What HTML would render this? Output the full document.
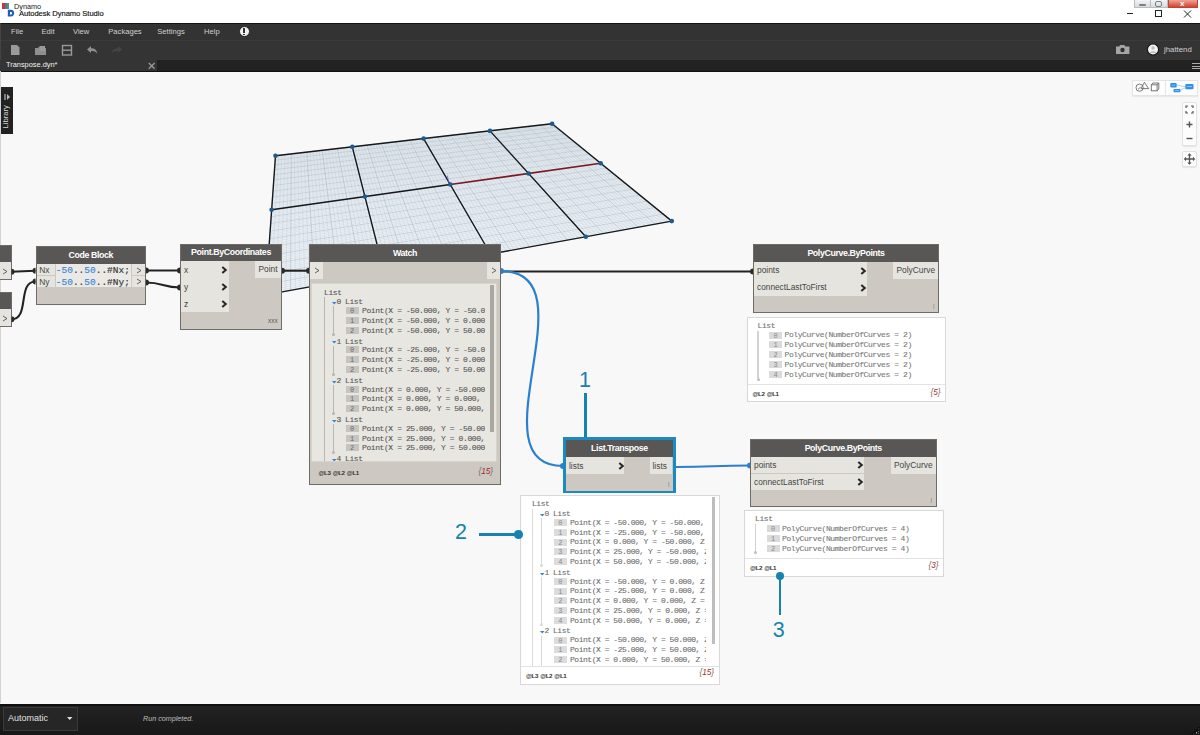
<!DOCTYPE html><html><head><meta charset="utf-8"><style>
*{margin:0;padding:0;box-sizing:border-box}
html,body{width:1200px;height:735px;overflow:hidden;background:#f8f8f8;font-family:"Liberation Sans",sans-serif}
.a{position:absolute}
.t{position:absolute;white-space:nowrap;line-height:1}
.mono{font-family:"Liberation Mono",monospace}
.node{position:absolute;background:#cfcbc4;border:1px solid #8f8b85}
.hdrx{position:absolute;left:0;right:0;top:0;background:#5b5957;color:#fff;font-weight:bold;font-size:8px;text-align:center}
.port{position:absolute;background:#e7e5e0;color:#3c3c3c;font-size:8.2px}
.chev{position:absolute;width:5px;height:5px;border-right:1.6px solid #2a2a2a;border-top:1.6px solid #2a2a2a;transform:rotate(45deg)}
.prev{position:absolute;background:#fff;border:1px solid #d9d9d9}
.row{position:absolute;white-space:nowrap;font-family:"Liberation Mono",monospace;font-size:8px;letter-spacing:inherit;color:#6a6a6a;line-height:1;-webkit-text-stroke:0.1px currentColor}
body{letter-spacing:-0.41px}
.t{letter-spacing:0}
.lbl{position:absolute;background:#d9d9d9;color:#8a8a8a;font-family:"Liberation Mono",monospace;font-size:7.5px;text-align:right;padding-right:2px;line-height:8px;height:8px}
</style></head><body><div class="a" style="left:0;top:0;width:1200px;height:23px;background:#ffffff"></div><div class="a" style="left:2px;top:3px;width:3px;height:6px;background:#c8363a"></div><div class="a" style="left:5px;top:3px;width:2px;height:6px;background:#5a6fa8"></div><div class="a" style="left:7px;top:3px;width:2px;height:6px;background:#3b9a8a"></div><div class="t" style="left:14px;top:2.5px;font-size:7.3px;color:#222">Dynamo</div><svg class="a" style="left:0;top:0" width="20" height="20"><path d="M7.8 9.8h3.2c2.1 0 3.1 1.6 3.1 3.4s-1 3.4-3.1 3.4H7.8z" fill="#1b5fb8"/><path d="M10 11.9h0.8c0.9 0 1.3 0.6 1.3 1.3s-0.4 1.3-1.3 1.3H10z" fill="#fff"/></svg><div class="t" style="left:19px;top:9.6px;font-size:7.6px;color:#111;-webkit-text-stroke:0.15px #111;letter-spacing:-0.05px">Autodesk Dynamo Studio</div><div class="a" style="left:1134px;top:0;width:17px;height:8px;background:linear-gradient(#f4f4f4,#d8dadd);border:1px solid #b9bcc0;border-top:0"></div><div class="a" style="left:1139px;top:4px;width:7px;height:2px;background:#7b7f85;border-radius:1px"></div><div class="a" style="left:1151px;top:0;width:17px;height:8px;background:linear-gradient(#f4f4f4,#d8dadd);border:1px solid #b9bcc0;border-top:0;border-left:0"></div><div class="a" style="left:1155px;top:1px;width:7px;height:6px;border:1.5px solid #7b7f85;border-radius:2px"></div><div class="a" style="left:1168px;top:0;width:30px;height:8px;background:linear-gradient(#e9a79a,#d9412b);border:1px solid #b8463a;border-top:0"></div><div class="t" style="left:1180px;top:-0.5px;font-size:8px;font-weight:bold;color:#fff">x</div><div class="a" style="left:1127px;top:13px;width:6px;height:1px;background:#222"></div><div class="a" style="left:1155px;top:10px;width:7px;height:7px;border:1px solid #222"></div><svg class="a" style="left:1183px;top:9.5px" width="9" height="8"><path d="M1 0.5L8 7.5M8 0.5L1 7.5" stroke="#222" stroke-width="1"/></svg><div class="a" style="left:0;top:23px;width:1200px;height:1px;background:#141414"></div><div class="a" style="left:0;top:24px;width:1200px;height:15.5px;background:#333333"></div><div class="a" style="left:0;top:39.5px;width:1200px;height:1px;background:#3b3b3b"></div><div class="a" style="left:0;top:40.5px;width:1200px;height:19.5px;background:#343434"></div><div class="a" style="left:0;top:23px;width:1px;height:48px;background:#444"></div><div class="t" style="left:11px;top:28px;font-size:7.6px;color:#d0d0d0">File</div><div class="t" style="left:41.5px;top:28px;font-size:7.6px;color:#d0d0d0">Edit</div><div class="t" style="left:73px;top:28px;font-size:7.6px;color:#d0d0d0">View</div><div class="t" style="left:108.3px;top:28px;font-size:7.6px;color:#d0d0d0">Packages</div><div class="t" style="left:157.3px;top:28px;font-size:7.6px;color:#d0d0d0">Settings</div><div class="t" style="left:204px;top:28px;font-size:7.6px;color:#d0d0d0">Help</div><div class="a" style="left:238.5px;top:26px;width:11px;height:11px;border-radius:50%;background:#f0f0f0;border:1px solid #222"></div><div class="a" style="left:243.2px;top:28px;width:1.6px;height:4.5px;background:#333"></div><div class="a" style="left:243.2px;top:33.5px;width:1.6px;height:1.6px;background:#333"></div><svg class="a" style="left:0;top:39px" width="140" height="20"><path d="M11 6h6l2.5 2.5V16H11z" fill="#9a9a9a"/><path d="M35 9h3l1-1.5h4V9h3v7H35z" fill="#8f8f8f"/><path d="M40 7h5v5h-5z" fill="#9a9a9a"/><rect x="62.5" y="6.5" width="9" height="9.5" fill="none" stroke="#9a9a9a" stroke-width="1.4"/><path d="M62.5 11.2h9" stroke="#9a9a9a" stroke-width="1.4"/><path d="M87 10.5l4-3.5v2.2c3 0 5.5 1 6.5 5.3c-1.8-2.2-3.5-2.6-6.5-2.6v2.2z" fill="#8f8f8f"/><path d="M122 10.5l-4-3.5v2.2c-3 0-5.5 1-6.5 5.3c1.8-2.2 3.5-2.6 6.5-2.6v2.2z" fill="#444"/></svg><svg class="a" style="left:1110px;top:39px" width="90" height="20"><path d="M6 7.5h3l1.2-1.5h4l1.2 1.5h4v7.5H6z" fill="#a5a5a5"/><circle cx="12.5" cy="11" r="2.2" fill="#2f2f2f"/><circle cx="43" cy="10.5" r="6" fill="#111"/><circle cx="43" cy="10.5" r="5" fill="#f2f2f2"/><circle cx="43" cy="9" r="1.7" fill="#bdbdbd"/><path d="M39.8 14c0.5-2.5 5.9-2.5 6.4 0z" fill="#bdbdbd"/></svg><div class="t" style="left:1164px;top:46px;font-size:7.8px;color:#d0d0d0">jhattend</div><div class="a" style="left:0;top:60px;width:1200px;height:11px;background:#222222"></div><div class="a" style="left:0;top:70.5px;width:1200px;height:1px;background:#121212"></div><div class="a" style="left:0;top:60px;width:157px;height:10.5px;background:#343434"></div><div class="t" style="left:6px;top:60.5px;font-size:7.4px;color:#f0f0f0">Transpose.dyn*</div><svg class="a" style="left:147px;top:61px" width="9" height="9"><path d="M1.8 2L7.6 7.8M7.6 2L1.8 7.8" stroke="#9a9a9a" stroke-width="1.3"/></svg><div class="a" style="left:1192px;top:63px;width:8px;height:1px;background:#aaa"></div><div class="a" style="left:1192px;top:65.5px;width:8px;height:1px;background:#aaa"></div><div class="a" style="left:1192px;top:68px;width:8px;height:1px;background:#aaa"></div><div class="a" style="left:0;top:71.5px;width:1200px;height:632px;background:#f8f8f8"></div><div class="a" style="left:0;top:71px;width:1px;height:632px;background:#d2d2d2"></div><div class="a" style="left:1px;top:87px;width:12px;height:47px;background:#222"></div><div class="t" style="left:-8px;top:112.5px;font-size:7.6px;color:#d5d5d5;transform:rotate(-90deg);width:28px;text-align:center">Library</div><svg class="a" style="left:3px;top:93px" width="8" height="8"><path d="M2 1v6" stroke="#bbb" stroke-width="1.2"/><path d="M4 1l3 3l-3 3z" fill="#bbb"/></svg><div class="a" style="left:0;top:703.5px;width:1200px;height:31.5px;background:linear-gradient(#101010 0,#101010 1.5px,#222 2px,#181818 100%)"></div><svg class="a" style="left:1190px;top:725px" width="10" height="10"><path d="M9 3v1h-1zM6 7h1v1h-1zM9 6v1h-1zM9 9h-1v-1zM6 9h1v-1zM3 9h1v-1z" fill="#aaa"/><path d="M9.5 2L2 9.5" stroke="#000" stroke-width="1"/></svg><div class="a" style="left:3px;top:707px;width:75px;height:24px;background:#262626;border:1px solid #3a3a3a"></div><div class="t" style="left:8px;top:714px;font-size:9px;color:#e0e0e0">Automatic</div><svg class="a" style="left:67px;top:717px" width="6" height="4"><path d="M0 0h5.5l-2.75 3z" fill="#ddd"/></svg><div class="t" style="left:143px;top:714.5px;font-size:7.2px;font-style:italic;color:#bdbdbd">Run completed.</div><svg class="a" style="left:0;top:0" width="1200" height="735"><polygon points="275.5,155.7 552.1,123.7 671.8,221.1 265.6,294.9" fill="#edf3f8"/><path d="M278.7 155.3L270.6 294.0M281.8 155.0L275.6 293.0M285.0 154.6L280.6 292.1M288.2 154.2L285.6 291.2M294.4 153.5L295.4 289.5M297.6 153.2L300.3 288.6M300.7 152.8L305.1 287.7M303.8 152.4L310.0 286.8M310.0 151.7L319.6 285.1M313.1 151.4L324.4 284.2M316.1 151.0L329.1 283.3M319.2 150.7L333.8 282.5M325.3 149.9L343.2 280.8M328.3 149.6L347.9 279.9M331.3 149.2L352.5 279.1M334.4 148.9L357.2 278.2M340.4 148.2L366.3 276.6M343.4 147.9L370.9 275.7M346.3 147.5L375.4 274.9M349.3 147.2L379.9 274.1M355.2 146.5L388.9 272.5M358.2 146.1L393.4 271.7M361.1 145.8L397.8 270.9M364.0 145.5L402.2 270.1M369.9 144.8L411.0 268.5M372.8 144.5L415.3 267.7M375.7 144.1L419.7 266.9M378.5 143.8L424.0 266.1M384.3 143.1L432.6 264.5M387.2 142.8L436.8 263.8M390.0 142.5L441.1 263.0M392.9 142.1L445.3 262.2M398.5 141.5L453.7 260.7M401.3 141.1L457.8 260.0M404.1 140.8L462.0 259.2M407.0 140.5L466.1 258.5M412.5 139.9L474.3 257.0M415.3 139.5L478.4 256.2M418.1 139.2L482.5 255.5M420.8 138.9L486.5 254.8M426.4 138.3L494.5 253.3M429.1 137.9L498.5 252.6M431.8 137.6L502.5 251.8M434.6 137.3L506.4 251.1M440.0 136.7L514.3 249.7M442.7 136.4L518.2 249.0M445.4 136.1L522.1 248.3M448.1 135.7L526.0 247.6M453.4 135.1L533.7 246.2M456.1 134.8L537.5 245.5M458.7 134.5L541.3 244.8M461.4 134.2L545.1 244.1M466.7 133.6L552.6 242.7M469.3 133.3L556.4 242.1M471.9 133.0L560.1 241.4M474.5 132.7L563.8 240.7M479.7 132.1L571.2 239.4M482.3 131.8L574.9 238.7M484.9 131.5L578.5 238.0M487.5 131.2L582.2 237.4M492.6 130.6L589.4 236.1M495.2 130.3L593.0 235.4M497.7 130.0L596.6 234.8M500.3 129.7L600.1 234.1M505.3 129.1L607.2 232.8M507.8 128.8L610.8 232.2M510.4 128.5L614.3 231.6M512.9 128.2L617.8 230.9M517.9 127.7L624.7 229.7M520.3 127.4L628.2 229.0M522.8 127.1L631.6 228.4M525.3 126.8L635.0 227.8M530.2 126.2L641.8 226.5M532.7 126.0L645.2 225.9M535.1 125.7L648.6 225.3M537.6 125.4L651.9 224.7M542.4 124.8L658.6 223.5M544.9 124.5L661.9 222.9M547.3 124.3L665.3 222.3M549.7 124.0L668.5 221.7M275.4 156.6L552.9 124.4M275.4 157.5L553.7 125.1M275.3 158.4L554.6 125.7M275.2 159.3L555.4 126.4M275.1 161.1L557.1 127.8M275.0 162.1L557.9 128.5M275.0 163.0L558.8 129.2M274.9 163.9L559.7 129.9M274.8 165.8L561.4 131.3M274.7 166.8L562.3 132.0M274.6 167.8L563.2 132.7M274.5 168.8L564.1 133.5M274.4 170.7L565.9 134.9M274.3 171.7L566.8 135.7M274.3 172.8L567.7 136.4M274.2 173.8L568.6 137.2M274.0 175.8L570.5 138.7M274.0 176.9L571.4 139.5M273.9 177.9L572.4 140.2M273.8 179.0L573.4 141.0M273.7 181.1L575.3 142.6M273.6 182.2L576.3 143.4M273.5 183.3L577.2 144.2M273.4 184.4L578.2 145.0M273.3 186.6L580.2 146.6M273.2 187.8L581.2 147.4M273.1 188.9L582.3 148.3M273.0 190.0L583.3 149.1M272.9 192.4L585.4 150.8M272.8 193.5L586.4 151.6M272.7 194.7L587.5 152.5M272.6 195.9L588.5 153.3M272.4 198.3L590.7 155.1M272.4 199.6L591.7 156.0M272.3 200.8L592.8 156.9M272.2 202.1L593.9 157.8M272.0 204.6L596.2 159.6M271.9 205.9L597.3 160.5M271.8 207.2L598.4 161.4M271.7 208.5L599.6 162.3M271.5 211.1L601.9 164.2M271.4 212.5L603.0 165.2M271.3 213.8L604.2 166.1M271.2 215.2L605.4 167.1M271.1 217.9L607.8 169.0M271.0 219.3L609.0 170.0M270.9 220.8L610.3 171.0M270.8 222.2L611.5 172.0M270.5 225.1L614.0 174.1M270.4 226.6L615.2 175.1M270.3 228.0L616.5 176.1M270.2 229.5L617.8 177.2M270.0 232.6L620.4 179.3M269.9 234.1L621.7 180.3M269.8 235.7L623.0 181.4M269.7 237.2L624.4 182.5M269.5 240.4L627.1 184.7M269.3 242.0L628.4 185.8M269.2 243.7L629.8 186.9M269.1 245.3L631.2 188.1M268.9 248.7L634.0 190.3M268.7 250.4L635.4 191.5M268.6 252.1L636.9 192.7M268.5 253.8L638.3 193.8M268.3 257.4L641.3 196.2M268.1 259.1L642.7 197.4M268.0 261.0L644.2 198.7M267.9 262.8L645.7 199.9M267.6 266.5L648.8 202.4M267.5 268.4L650.4 203.6M267.3 270.3L651.9 204.9M267.2 272.2L653.5 206.2M266.9 276.1L656.7 208.8M266.8 278.1L658.3 210.1M266.6 280.1L660.0 211.4M266.5 282.2L661.6 212.8M266.2 286.3L665.0 215.5M266.0 288.4L666.6 216.9M265.9 290.5L668.4 218.3M265.7 292.7L670.1 219.7" stroke="#a9b6c0" stroke-width="0.5" stroke-opacity="0.45" fill="none"/><path d="M275.5 155.7L265.6 294.9M291.3 153.9L290.5 290.3M306.9 152.1L314.8 285.9M322.2 150.3L338.6 281.6M337.4 148.5L361.8 277.4M352.3 146.8L384.4 273.3M367.0 145.1L406.6 269.3M381.4 143.5L428.3 265.3M395.7 141.8L449.5 261.5M409.7 140.2L470.2 257.7M423.6 138.6L490.5 254.0M437.3 137.0L510.4 250.4M450.7 135.4L529.8 246.9M464.0 133.9L548.9 243.4M477.1 132.4L567.5 240.0M490.0 130.9L585.8 236.7M502.8 129.4L603.7 233.5M515.4 128.0L621.2 230.3M527.8 126.5L638.4 227.2M540.0 125.1L655.3 224.1M552.1 123.7L671.8 221.1M275.5 155.7L552.1 123.7M275.2 160.2L556.2 127.1M274.8 164.9L560.5 130.6M274.5 169.7L565.0 134.2M274.1 174.8L569.6 137.9M273.7 180.0L574.3 141.8M273.4 185.5L579.2 145.8M273.0 191.2L584.3 149.9M272.5 197.1L589.6 154.2M272.1 203.3L595.1 158.7M271.6 209.8L600.7 163.3M271.2 216.6L606.6 168.1M270.6 223.6L612.7 173.0M270.1 231.1L619.1 178.2M269.6 238.8L625.7 183.6M269.0 247.0L632.6 189.2M268.4 255.6L639.8 195.0M267.7 264.6L647.3 201.1M267.1 274.2L655.1 207.5M266.3 284.2L663.3 214.1M265.6 294.9L671.8 221.1" stroke="#98a6b2" stroke-width="0.6" stroke-opacity="0.7" fill="none"/><path d="M275.5 155.7L265.6 294.9M352.3 146.8L384.4 273.3M423.6 138.6L490.5 254.0M490.0 130.9L585.8 236.7M552.1 123.7L671.8 221.1M275.5 155.7L552.1 123.7M265.6 294.9L671.8 221.1M271.6 209.8L450.3 184.5" stroke="#15191b" stroke-width="1.4" fill="none"/><path d="M450.3 184.5L600.7 163.3" stroke="#7a1a22" stroke-width="1.6" fill="none"/><path d="M448.8 182.5L447.3 175.5" stroke="#6a6ae0" stroke-width="0.8" fill="none"/><g fill="#1f5a8c"><circle cx="275.5" cy="155.7" r="2.3"/><circle cx="271.6" cy="209.8" r="2.3"/><circle cx="265.6" cy="294.9" r="2.3"/><circle cx="352.3" cy="146.8" r="2.3"/><circle cx="364.9" cy="196.6" r="2.3"/><circle cx="384.4" cy="273.3" r="2.3"/><circle cx="423.6" cy="138.6" r="2.3"/><circle cx="450.3" cy="184.5" r="2.3"/><circle cx="490.5" cy="254.0" r="2.3"/><circle cx="490.0" cy="130.9" r="2.3"/><circle cx="528.6" cy="173.5" r="2.3"/><circle cx="585.8" cy="236.7" r="2.3"/><circle cx="552.1" cy="123.7" r="2.3"/><circle cx="600.7" cy="163.3" r="2.3"/><circle cx="671.8" cy="221.1" r="2.3"/></g></svg><div class="a" style="left:1131.5px;top:80.0px;width:66.0px;height:15.5px;background:#fdfdfd;border:1px solid #e4e4e4;box-shadow:0 1px 1px rgba(0,0,0,0.06)"></div><div class="a" style="left:1164.5px;top:81.0px;width:1.0px;height:14.0px;background:#e6e6e6;"></div><svg class="a" style="left:1130px;top:76px" width="70" height="24"><circle cx="9.6" cy="11.7" r="3.6" fill="none" stroke="#6a6a6a" stroke-width="0.9"/><path d="M8 13.3l2.6-2.2" stroke="#6a6a6a" stroke-width="0.9"/><path d="M14.4 6.3l4.3 6.3h-7.6z" fill="none" stroke="#6a6a6a" stroke-width="0.9"/><rect x="21.3" y="8.8" width="5.8" height="6" fill="none" stroke="#6a6a6a" stroke-width="0.9"/><path d="M21.3 8.8l1.6-1.8h5.9v6l-1.7 1.8M27.1 8.8l1.7-1.8" fill="none" stroke="#6a6a6a" stroke-width="0.9"/><rect x="40.3" y="7" width="6.4" height="4.4" rx="1" fill="#2d8fe8"/><path d="M41.6 9.2h3.8" stroke="#bfe0ff" stroke-width="0.6"/><rect x="43.5" y="13" width="7" height="3.2" rx="1" fill="#2d8fe8"/><path d="M44.8 14.6h4.4" stroke="#bfe0ff" stroke-width="0.6"/><rect x="55.3" y="8" width="8.2" height="5.2" rx="1" fill="#2d8fe8"/><path d="M56.8 10.6h5.2" stroke="#bfe0ff" stroke-width="0.7"/><path d="M46.7 9l8.6 1.8M50.5 14.3l4.8-2.6" stroke="#7ab6ea" stroke-width="0.6" fill="none"/></svg><div class="a" style="left:1182.0px;top:101.5px;width:15.0px;height:44.5px;background:#fdfdfd;border:1px solid #e2e2e2;border-radius:2px;box-shadow:0 1px 1px rgba(0,0,0,0.08)"></div><svg class="a" style="left:1182px;top:101.5px" width="15" height="45"><path d="M4 6V4h2M9 4h2v2M11 9v2H9M6 11H4V9" fill="none" stroke="#555" stroke-width="1.2"/><path d="M7.5 19.5v6M4.5 22.5h6" stroke="#555" stroke-width="1.4"/><path d="M4.5 36.5h6" stroke="#555" stroke-width="1.4"/></svg><div class="a" style="left:1182.0px;top:150.7px;width:15.0px;height:16.1px;background:#fdfdfd;border:1px solid #e2e2e2;border-radius:2px;box-shadow:0 1px 1px rgba(0,0,0,0.08)"></div><svg class="a" style="left:1182px;top:150.7px" width="15" height="16"><path d="M7.5 3.5v9M3 8h9" stroke="#555" stroke-width="1.3"/><path d="M7.5 2.3l-2.2 2.2h4.4zM7.5 13.7l-2.2-2.2h4.4zM1.8 8l2.2-2.2v4.4zM13.2 8l-2.2-2.2v4.4z" fill="#555"/></svg><svg class="a" style="left:0;top:0" width="1200" height="735"><path d="M11.5 271.8 C23 271.8 23 270.8 35.5 270.8" stroke="#222" stroke-width="2.1" fill="none"/><path d="M11.5 319.3 C30 319.3 17 281.5 35.5 281.5" stroke="#222" stroke-width="2.1" fill="none"/><path d="M146 270.5 C163 270.5 163 270.5 180 270.5" stroke="#222" stroke-width="2.1" fill="none"/><path d="M146 282.5 C163 282.5 163 287.5 180 287.5" stroke="#222" stroke-width="2.1" fill="none"/><path d="M282 270.7 C295 270.7 296 270.7 309 270.7" stroke="#222" stroke-width="2.1" fill="none"/><path d="M501 271.5 L753 271.5" stroke="#222" stroke-width="2.1" fill="none"/><path d="M501 271 C594.4 271 471.7 466 563 466" stroke="#2a7fd0" stroke-width="2.2" fill="none"/><path d="M676 467 C713 467 713 465.5 750 465.5" stroke="#2a7fd0" stroke-width="2.2" fill="none"/></svg><div class="a" style="left:0.0px;top:245.0px;width:11.5px;height:34.5px;background:#6f6c68;"></div><div class="a" style="left:0.0px;top:245.5px;width:10.5px;height:16.5px;background:#595756;"></div><div class="a" style="left:0.0px;top:262.0px;width:10.5px;height:17.0px;background:#e6e4df;"></div><svg class="a" style="left:2.0px;top:267.5px" width="6" height="7"><path d="M1 1L5 3.5L1 6" stroke="#555" stroke-width="0.9" fill="none"/></svg><div class="a" style="left:0.0px;top:292.0px;width:11.5px;height:34.5px;background:#6f6c68;"></div><div class="a" style="left:0.0px;top:292.5px;width:10.5px;height:16.5px;background:#595756;"></div><div class="a" style="left:0.0px;top:309.0px;width:10.5px;height:17.0px;background:#e6e4df;"></div><svg class="a" style="left:2.0px;top:314.5px" width="6" height="7"><path d="M1 1L5 3.5L1 6" stroke="#555" stroke-width="0.9" fill="none"/></svg><div class="a" style="left:35.5px;top:246.0px;width:110.5px;height:59.0px;background:#6f6c68;"></div><div class="a" style="left:36.5px;top:247.0px;width:108.5px;height:57.0px;background:#cdc9c2;"></div><div class="a" style="left:36.5px;top:247.0px;width:108.5px;height:17.0px;background:#595756;"></div><div class="t" style="left:35.5px;top:250.8px;width:110.5px;text-align:center;font-size:8.8px;color:#fff;font-weight:bold;letter-spacing:-0.38px">Code Block</div><div class="a" style="left:36.5px;top:264.0px;width:18.5px;height:11.0px;background:#e6e4df;"></div><div class="a" style="left:36.5px;top:276.0px;width:18.5px;height:11.0px;background:#e6e4df;"></div><div class="a" style="left:55.5px;top:264.0px;width:75.5px;height:23.0px;background:#ebe9e5;"></div><div class="a" style="left:132.0px;top:264.0px;width:13.0px;height:11.0px;background:#e6e4df;"></div><div class="a" style="left:132.0px;top:276.0px;width:13.0px;height:11.0px;background:#e6e4df;"></div><div class="t" style="left:39.3px;top:266.2px;font-size:8.4px;color:#444;">Nx</div><div class="t" style="left:39.3px;top:277.6px;font-size:8.4px;color:#444;">Ny</div><div class="t mono" style="left:55.8px;top:266.3px;font-size:9.5px;-webkit-text-stroke:0.15px currentColor;color:#333"><span style="color:#3b87d4">-50</span>..<span style="color:#3b87d4">50</span>..#Nx;</div><div class="t mono" style="left:55.8px;top:277.7px;font-size:9.5px;-webkit-text-stroke:0.15px currentColor;color:#333"><span style="color:#3b87d4">-50</span>..<span style="color:#3b87d4">50</span>..#Ny;</div><svg class="a" style="left:135.5px;top:266.5px" width="6" height="7"><path d="M1 1L5 3.5L1 6" stroke="#555" stroke-width="0.9" fill="none"/></svg><svg class="a" style="left:135.5px;top:278.0px" width="6" height="7"><path d="M1 1L5 3.5L1 6" stroke="#555" stroke-width="0.9" fill="none"/></svg><div class="a" style="left:180.0px;top:244.0px;width:102.0px;height:86.0px;background:#6f6c68;"></div><div class="a" style="left:181.0px;top:245.0px;width:100.0px;height:84.0px;background:#cdc9c2;"></div><div class="a" style="left:181.0px;top:245.0px;width:100.0px;height:16.0px;background:#595756;"></div><div class="t" style="left:180.0px;top:248.3px;width:102.0px;text-align:center;font-size:8.8px;color:#fff;font-weight:bold;letter-spacing:-0.38px">Point.ByCoordinates</div><div class="a" style="left:181.0px;top:261.0px;width:47.5px;height:16.5px;background:#e6e4df;"></div><div class="t" style="left:184.0px;top:265.5px;font-size:8.4px;color:#444;">x</div><svg class="a" style="left:221.0px;top:265.5px" width="7" height="8"><path d="M1.3 0.9L4.8 4L1.3 7.1" stroke="#262626" stroke-width="2" fill="none"/></svg><div class="a" style="left:181.0px;top:278.0px;width:47.5px;height:16.5px;background:#e6e4df;"></div><div class="t" style="left:184.0px;top:282.5px;font-size:8.4px;color:#444;">y</div><svg class="a" style="left:221.0px;top:282.5px" width="7" height="8"><path d="M1.3 0.9L4.8 4L1.3 7.1" stroke="#262626" stroke-width="2" fill="none"/></svg><div class="a" style="left:181.0px;top:295.0px;width:47.5px;height:16.5px;background:#e6e4df;"></div><div class="t" style="left:184.0px;top:299.5px;font-size:8.4px;color:#444;">z</div><svg class="a" style="left:221.0px;top:299.5px" width="7" height="8"><path d="M1.3 0.9L4.8 4L1.3 7.1" stroke="#262626" stroke-width="2" fill="none"/></svg><div class="a" style="left:254.7px;top:261.0px;width:26.3px;height:17.0px;background:#e6e4df;"></div><div class="t" style="left:258.5px;top:265.2px;font-size:8.4px;color:#444;">Point</div><div class="t" style="left:268.0px;top:318.0px;font-size:6.5px;color:#5a5a5a;">xxx</div><div class="a" style="left:309.0px;top:244.0px;width:192.0px;height:240.5px;background:#6f6c68;"></div><div class="a" style="left:310.0px;top:245.0px;width:190.0px;height:238.5px;background:#cdc9c2;"></div><div class="a" style="left:310.0px;top:245.0px;width:190.0px;height:17.0px;background:#595756;"></div><div class="t" style="left:309.0px;top:248.8px;width:192.0px;text-align:center;font-size:8.8px;color:#fff;font-weight:bold;letter-spacing:-0.38px">Watch</div><div class="a" style="left:310.0px;top:262.0px;width:13.0px;height:17.0px;background:#e6e4df;"></div><svg class="a" style="left:313.5px;top:267.0px" width="6" height="7"><path d="M1 1L5 3.5L1 6" stroke="#555" stroke-width="0.9" fill="none"/></svg><div class="a" style="left:487.0px;top:262.0px;width:13.0px;height:17.0px;background:#e6e4df;"></div><svg class="a" style="left:490.5px;top:267.0px" width="6" height="7"><path d="M1 1L5 3.5L1 6" stroke="#555" stroke-width="0.9" fill="none"/></svg><div class="a" style="left:311.0px;top:283.0px;width:186.0px;height:179.0px;background:#e8e6e1;border:1px solid #d6d3cd"></div><div class="a" style="left:490.0px;top:284.5px;width:3.5px;height:147.5px;background:#aaa7a1;"></div><div class="t" style="left:318.5px;top:469.5px;font-size:6.2px;color:#333;font-weight:bold;letter-spacing:-0.45px;word-spacing:1px">@L3 @L2 @L1</div><div class="t" style="left:478.5px;top:467.5px;font-size:8.2px;color:#7a6a6a;font-style:italic">{<span style="color:#a51f1f">15</span>}</div><div class="a" style="left:312px;top:284px;width:173px;height:177px;overflow:hidden"><div class="row" style="left:12.0px;top:4.5px;color:#555">List</div><div class="a" style="left:11.5px;top:13.1px;width:1.5px;height:397.5px;background:#b9b6b0;"></div><svg class="a" style="left:19.5px;top:18.2px" width="5" height="3"><path d="M0 0h4.5L2.25 2.6z" fill="#3b82c8"/></svg><div class="row" style="left:24.5px;top:14.3px;color:#555">0</div><div class="row" style="left:33.0px;top:14.3px;color:#555">List</div><div class="lbl" style="left:33.5px;top:23.2px;width:13px;height:7px;line-height:7.5px;font-size:7px;background:#c6c4c0;color:#6a6a6a;text-align:center;padding:1px 0 0 0">0</div><div class="row" style="left:50.0px;top:23.1px;color:#555">Point(X = -50.000, Y = -50.000, Z = 0.000)</div><div class="lbl" style="left:33.5px;top:33.0px;width:13px;height:7px;line-height:7.5px;font-size:7px;background:#c6c4c0;color:#6a6a6a;text-align:center;padding:1px 0 0 0">1</div><div class="row" style="left:50.0px;top:32.9px;color:#555">Point(X = -50.000, Y = 0.000, Z = 0.000)</div><div class="lbl" style="left:33.5px;top:42.8px;width:13px;height:7px;line-height:7.5px;font-size:7px;background:#c6c4c0;color:#6a6a6a;text-align:center;padding:1px 0 0 0">2</div><div class="row" style="left:50.0px;top:42.7px;color:#555">Point(X = -50.000, Y = 50.000, Z = 0.000)</div><div class="a" style="left:21.2px;top:22.4px;width:1.2px;height:28.4px;background:#b9b6b0;"></div><div class="a" style="left:20.3px;top:49.3px;width:3px;height:3px;border-radius:50%;background:#b9b6b0"></div><svg class="a" style="left:19.5px;top:57.4px" width="5" height="3"><path d="M0 0h4.5L2.25 2.6z" fill="#3b82c8"/></svg><div class="row" style="left:24.5px;top:53.5px;color:#555">1</div><div class="row" style="left:33.0px;top:53.5px;color:#555">List</div><div class="lbl" style="left:33.5px;top:62.4px;width:13px;height:7px;line-height:7.5px;font-size:7px;background:#c6c4c0;color:#6a6a6a;text-align:center;padding:1px 0 0 0">0</div><div class="row" style="left:50.0px;top:62.3px;color:#555">Point(X = -25.000, Y = -50.000, Z = 0.000)</div><div class="lbl" style="left:33.5px;top:72.2px;width:13px;height:7px;line-height:7.5px;font-size:7px;background:#c6c4c0;color:#6a6a6a;text-align:center;padding:1px 0 0 0">1</div><div class="row" style="left:50.0px;top:72.1px;color:#555">Point(X = -25.000, Y = 0.000, Z = 0.000)</div><div class="lbl" style="left:33.5px;top:82.0px;width:13px;height:7px;line-height:7.5px;font-size:7px;background:#c6c4c0;color:#6a6a6a;text-align:center;padding:1px 0 0 0">2</div><div class="row" style="left:50.0px;top:81.9px;color:#555">Point(X = -25.000, Y = 50.000, Z = 0.000)</div><div class="a" style="left:21.2px;top:61.6px;width:1.2px;height:28.4px;background:#b9b6b0;"></div><div class="a" style="left:20.3px;top:88.5px;width:3px;height:3px;border-radius:50%;background:#b9b6b0"></div><svg class="a" style="left:19.5px;top:96.6px" width="5" height="3"><path d="M0 0h4.5L2.25 2.6z" fill="#3b82c8"/></svg><div class="row" style="left:24.5px;top:92.7px;color:#555">2</div><div class="row" style="left:33.0px;top:92.7px;color:#555">List</div><div class="lbl" style="left:33.5px;top:101.6px;width:13px;height:7px;line-height:7.5px;font-size:7px;background:#c6c4c0;color:#6a6a6a;text-align:center;padding:1px 0 0 0">0</div><div class="row" style="left:50.0px;top:101.5px;color:#555">Point(X = 0.000, Y = -50.000, Z = 0.000)</div><div class="lbl" style="left:33.5px;top:111.4px;width:13px;height:7px;line-height:7.5px;font-size:7px;background:#c6c4c0;color:#6a6a6a;text-align:center;padding:1px 0 0 0">1</div><div class="row" style="left:50.0px;top:111.3px;color:#555">Point(X = 0.000, Y = 0.000, Z = 0.000)</div><div class="lbl" style="left:33.5px;top:121.2px;width:13px;height:7px;line-height:7.5px;font-size:7px;background:#c6c4c0;color:#6a6a6a;text-align:center;padding:1px 0 0 0">2</div><div class="row" style="left:50.0px;top:121.1px;color:#555">Point(X = 0.000, Y = 50.000, Z = 0.000)</div><div class="a" style="left:21.2px;top:100.8px;width:1.2px;height:28.4px;background:#b9b6b0;"></div><div class="a" style="left:20.3px;top:127.7px;width:3px;height:3px;border-radius:50%;background:#b9b6b0"></div><svg class="a" style="left:19.5px;top:135.8px" width="5" height="3"><path d="M0 0h4.5L2.25 2.6z" fill="#3b82c8"/></svg><div class="row" style="left:24.5px;top:131.9px;color:#555">3</div><div class="row" style="left:33.0px;top:131.9px;color:#555">List</div><div class="lbl" style="left:33.5px;top:140.8px;width:13px;height:7px;line-height:7.5px;font-size:7px;background:#c6c4c0;color:#6a6a6a;text-align:center;padding:1px 0 0 0">0</div><div class="row" style="left:50.0px;top:140.7px;color:#555">Point(X = 25.000, Y = -50.000, Z = 0.000)</div><div class="lbl" style="left:33.5px;top:150.6px;width:13px;height:7px;line-height:7.5px;font-size:7px;background:#c6c4c0;color:#6a6a6a;text-align:center;padding:1px 0 0 0">1</div><div class="row" style="left:50.0px;top:150.5px;color:#555">Point(X = 25.000, Y = 0.000, Z = 0.000)</div><div class="lbl" style="left:33.5px;top:160.4px;width:13px;height:7px;line-height:7.5px;font-size:7px;background:#c6c4c0;color:#6a6a6a;text-align:center;padding:1px 0 0 0">2</div><div class="row" style="left:50.0px;top:160.3px;color:#555">Point(X = 25.000, Y = 50.000, Z = 0.000)</div><div class="a" style="left:21.2px;top:140.0px;width:1.2px;height:28.4px;background:#b9b6b0;"></div><div class="a" style="left:20.3px;top:166.9px;width:3px;height:3px;border-radius:50%;background:#b9b6b0"></div><svg class="a" style="left:19.5px;top:175.0px" width="5" height="3"><path d="M0 0h4.5L2.25 2.6z" fill="#3b82c8"/></svg><div class="row" style="left:24.5px;top:171.1px;color:#555">4</div><div class="row" style="left:33.0px;top:171.1px;color:#555">List</div></div><div class="a" style="left:753.0px;top:244.0px;width:186.0px;height:69.0px;background:#6f6c68;"></div><div class="a" style="left:754.0px;top:245.0px;width:184.0px;height:67.0px;background:#cdc9c2;"></div><div class="a" style="left:754.0px;top:245.0px;width:184.0px;height:17.0px;background:#595756;"></div><div class="t" style="left:753.0px;top:248.8px;width:186.0px;text-align:center;font-size:8.8px;color:#fff;font-weight:bold;letter-spacing:-0.38px">PolyCurve.ByPoints</div><div class="a" style="left:754.0px;top:262.0px;width:113.0px;height:16.5px;background:#e6e4df;"></div><div class="t" style="left:757.0px;top:266.2px;font-size:8.4px;color:#444;">points</div><svg class="a" style="left:860.0px;top:266.5px" width="7" height="8"><path d="M1.3 0.9L4.8 4L1.3 7.1" stroke="#262626" stroke-width="2" fill="none"/></svg><div class="a" style="left:754.0px;top:279.0px;width:113.0px;height:16.5px;background:#e6e4df;"></div><div class="t" style="left:757.0px;top:283.2px;font-size:8.3px;color:#444;">connectLastToFirst</div><svg class="a" style="left:860.0px;top:283.5px" width="7" height="8"><path d="M1.3 0.9L4.8 4L1.3 7.1" stroke="#262626" stroke-width="2" fill="none"/></svg><div class="a" style="left:893.0px;top:262.0px;width:45.0px;height:17.0px;background:#e6e4df;"></div><div class="t" style="left:896.5px;top:266.2px;font-size:8.4px;color:#444;">PolyCurve</div><div class="t" style="left:933.0px;top:303.0px;font-size:6px;color:#777;">|</div><div class="a" style="left:746.5px;top:316.5px;width:199.0px;height:85.2px;background:#ffffff;border:1px solid #d8d8d8"></div><div class="a" style="left:747.5px;top:384.3px;width:197.0px;height:1.0px;background:#e3e3e3;"></div><div class="row" style="left:757.5px;top:321.9px;color:#707070">List</div><div class="a" style="left:757.3px;top:330.5px;width:1.5px;height:47.5px;background:#d2d2d2;"></div><div class="a" style="left:756.5px;top:377.5px;width:3px;height:3px;border-radius:50%;background:#bdbdbd"></div><div class="lbl" style="left:769.0px;top:331.5px;width:13px;height:7px;line-height:7.5px;font-size:7px;background:#dadada;color:#8a8a8a;text-align:center;padding:1px 0 0 0">0</div><div class="row" style="left:784.5px;top:331.4px;color:#777">PolyCurve(NumberOfCurves = 2)</div><div class="lbl" style="left:769.0px;top:341.3px;width:13px;height:7px;line-height:7.5px;font-size:7px;background:#dadada;color:#8a8a8a;text-align:center;padding:1px 0 0 0">1</div><div class="row" style="left:784.5px;top:341.2px;color:#777">PolyCurve(NumberOfCurves = 2)</div><div class="lbl" style="left:769.0px;top:351.1px;width:13px;height:7px;line-height:7.5px;font-size:7px;background:#dadada;color:#8a8a8a;text-align:center;padding:1px 0 0 0">2</div><div class="row" style="left:784.5px;top:351.0px;color:#777">PolyCurve(NumberOfCurves = 2)</div><div class="lbl" style="left:769.0px;top:360.9px;width:13px;height:7px;line-height:7.5px;font-size:7px;background:#dadada;color:#8a8a8a;text-align:center;padding:1px 0 0 0">3</div><div class="row" style="left:784.5px;top:360.8px;color:#777">PolyCurve(NumberOfCurves = 2)</div><div class="lbl" style="left:769.0px;top:370.7px;width:13px;height:7px;line-height:7.5px;font-size:7px;background:#dadada;color:#8a8a8a;text-align:center;padding:1px 0 0 0">4</div><div class="row" style="left:784.5px;top:370.6px;color:#777">PolyCurve(NumberOfCurves = 2)</div><div class="t" style="left:752.5px;top:391.3px;font-size:6.2px;color:#333;font-weight:bold;letter-spacing:-0.45px;word-spacing:1px">@L2 @L1</div><div class="t" style="left:930.5px;top:388.6px;font-size:8.2px;color:#7a6a6a;font-style:italic">{<span style="color:#a51f1f">5</span>}</div><div class="a" style="left:563.0px;top:437.0px;width:113.0px;height:56.0px;background:#1b8bbf;"></div><div class="a" style="left:566.0px;top:440.0px;width:107.0px;height:50.5px;background:#cdc9c2;"></div><div class="a" style="left:566.0px;top:440.0px;width:107.0px;height:17.0px;background:#595756;"></div><div class="t" style="left:566.0px;top:444.3px;width:107.0px;text-align:center;font-size:8.8px;color:#fff;font-weight:bold;letter-spacing:-0.38px">List.Transpose</div><div class="a" style="left:566.0px;top:457.0px;width:58.3px;height:17.0px;background:#e6e4df;"></div><div class="t" style="left:569.0px;top:462.0px;font-size:8.4px;color:#444;">lists</div><svg class="a" style="left:617.5px;top:461.5px" width="7" height="8"><path d="M1.3 0.9L4.8 4L1.3 7.1" stroke="#262626" stroke-width="2" fill="none"/></svg><div class="a" style="left:650.3px;top:457.0px;width:22.2px;height:17.0px;background:#e6e4df;"></div><div class="t" style="left:652.5px;top:462.0px;font-size:8.4px;color:#444;">lists</div><div class="t" style="left:668.0px;top:481.0px;font-size:6px;color:#777;">|</div><div class="a" style="left:750.0px;top:438.8px;width:186.5px;height:68.2px;background:#6f6c68;"></div><div class="a" style="left:751.0px;top:439.8px;width:184.5px;height:66.2px;background:#cdc9c2;"></div><div class="a" style="left:751.0px;top:439.8px;width:184.5px;height:17.0px;background:#595756;"></div><div class="t" style="left:750.0px;top:443.6px;width:186.5px;text-align:center;font-size:8.8px;color:#fff;font-weight:bold;letter-spacing:-0.38px">PolyCurve.ByPoints</div><div class="a" style="left:751.0px;top:456.8px;width:113.0px;height:16.5px;background:#e6e4df;"></div><div class="t" style="left:754.0px;top:461.0px;font-size:8.4px;color:#444;">points</div><svg class="a" style="left:857.0px;top:461.3px" width="7" height="8"><path d="M1.3 0.9L4.8 4L1.3 7.1" stroke="#262626" stroke-width="2" fill="none"/></svg><div class="a" style="left:751.0px;top:473.8px;width:113.0px;height:16.5px;background:#e6e4df;"></div><div class="t" style="left:754.0px;top:478.0px;font-size:8.3px;color:#444;">connectLastToFirst</div><svg class="a" style="left:857.0px;top:478.3px" width="7" height="8"><path d="M1.3 0.9L4.8 4L1.3 7.1" stroke="#262626" stroke-width="2" fill="none"/></svg><div class="a" style="left:890.5px;top:456.8px;width:45.0px;height:17.0px;background:#e6e4df;"></div><div class="t" style="left:894.0px;top:461.0px;font-size:8.4px;color:#444;">PolyCurve</div><div class="t" style="left:930.5px;top:497.0px;font-size:6px;color:#777;">|</div><div class="a" style="left:744.0px;top:510.0px;width:199.5px;height:66.5px;background:#ffffff;border:1px solid #d8d8d8"></div><div class="a" style="left:745.0px;top:558.0px;width:197.5px;height:1.0px;background:#e3e3e3;"></div><div class="row" style="left:755.0px;top:515.4px;color:#707070">List</div><div class="a" style="left:754.8px;top:524.0px;width:1.5px;height:27.9px;background:#d2d2d2;"></div><div class="a" style="left:754.0px;top:551.4px;width:3px;height:3px;border-radius:50%;background:#bdbdbd"></div><div class="lbl" style="left:766.5px;top:525.0px;width:13px;height:7px;line-height:7.5px;font-size:7px;background:#dadada;color:#8a8a8a;text-align:center;padding:1px 0 0 0">0</div><div class="row" style="left:782.0px;top:524.9px;color:#777">PolyCurve(NumberOfCurves = 4)</div><div class="lbl" style="left:766.5px;top:534.8px;width:13px;height:7px;line-height:7.5px;font-size:7px;background:#dadada;color:#8a8a8a;text-align:center;padding:1px 0 0 0">1</div><div class="row" style="left:782.0px;top:534.7px;color:#777">PolyCurve(NumberOfCurves = 4)</div><div class="lbl" style="left:766.5px;top:544.6px;width:13px;height:7px;line-height:7.5px;font-size:7px;background:#dadada;color:#8a8a8a;text-align:center;padding:1px 0 0 0">2</div><div class="row" style="left:782.0px;top:544.5px;color:#777">PolyCurve(NumberOfCurves = 4)</div><div class="t" style="left:750.0px;top:565.0px;font-size:6.2px;color:#333;font-weight:bold;letter-spacing:-0.45px;word-spacing:1px">@L2 @L1</div><div class="t" style="left:928.5px;top:562.3px;font-size:8.2px;color:#7a6a6a;font-style:italic">{<span style="color:#a51f1f">3</span>}</div><div class="a" style="left:520.0px;top:494.5px;width:199.5px;height:190.0px;background:#ffffff;border:1px solid #d8d8d8"></div><div class="a" style="left:521.0px;top:666.0px;width:197.5px;height:1.0px;background:#e3e3e3;"></div><div class="a" style="left:711.5px;top:497.0px;width:3.5px;height:146.5px;background:#bdbdbd;"></div><div class="a" style="left:521px;top:495.5px;width:185px;height:170px;overflow:hidden;letter-spacing:-0.47px"><div class="row" style="left:11.0px;top:4.5px;color:#6c6c6c">List</div><div class="a" style="left:10.5px;top:13.1px;width:1.5px;height:397.5px;background:#d9d9d9;"></div><svg class="a" style="left:18.5px;top:18.2px" width="5" height="3"><path d="M0 0h4.5L2.25 2.6z" fill="#3b82c8"/></svg><div class="row" style="left:23.5px;top:14.3px;color:#6c6c6c">0</div><div class="row" style="left:32.0px;top:14.3px;color:#6c6c6c">List</div><div class="lbl" style="left:32.5px;top:23.4px;width:13px;height:7px;line-height:7.5px;font-size:7px;background:#dcdcdc;color:#888;text-align:center;padding:1px 0 0 0">0</div><div class="row" style="left:49.0px;top:23.3px;color:#6c6c6c">Point(X = -50.000, Y = -50.000, Z = 0.000)</div><div class="lbl" style="left:32.5px;top:33.2px;width:13px;height:7px;line-height:7.5px;font-size:7px;background:#dcdcdc;color:#888;text-align:center;padding:1px 0 0 0">1</div><div class="row" style="left:49.0px;top:33.1px;color:#6c6c6c">Point(X = -25.000, Y = -50.000, Z = 0.000)</div><div class="lbl" style="left:32.5px;top:43.0px;width:13px;height:7px;line-height:7.5px;font-size:7px;background:#dcdcdc;color:#888;text-align:center;padding:1px 0 0 0">2</div><div class="row" style="left:49.0px;top:42.9px;color:#6c6c6c">Point(X = 0.000, Y = -50.000, Z = 0.000)</div><div class="lbl" style="left:32.5px;top:52.8px;width:13px;height:7px;line-height:7.5px;font-size:7px;background:#dcdcdc;color:#888;text-align:center;padding:1px 0 0 0">3</div><div class="row" style="left:49.0px;top:52.7px;color:#6c6c6c">Point(X = 25.000, Y = -50.000, Z = 0.000)</div><div class="lbl" style="left:32.5px;top:62.6px;width:13px;height:7px;line-height:7.5px;font-size:7px;background:#dcdcdc;color:#888;text-align:center;padding:1px 0 0 0">4</div><div class="row" style="left:49.0px;top:62.5px;color:#6c6c6c">Point(X = 50.000, Y = -50.000, Z = 0.000)</div><div class="a" style="left:20.2px;top:22.4px;width:1.2px;height:48.0px;background:#d9d9d9;"></div><div class="a" style="left:19.3px;top:68.9px;width:3px;height:3px;border-radius:50%;background:#d9d9d9"></div><svg class="a" style="left:18.5px;top:77.0px" width="5" height="3"><path d="M0 0h4.5L2.25 2.6z" fill="#3b82c8"/></svg><div class="row" style="left:23.5px;top:73.1px;color:#6c6c6c">1</div><div class="row" style="left:32.0px;top:73.1px;color:#6c6c6c">List</div><div class="lbl" style="left:32.5px;top:82.2px;width:13px;height:7px;line-height:7.5px;font-size:7px;background:#dcdcdc;color:#888;text-align:center;padding:1px 0 0 0">0</div><div class="row" style="left:49.0px;top:82.1px;color:#6c6c6c">Point(X = -50.000, Y = 0.000, Z = 0.000)</div><div class="lbl" style="left:32.5px;top:92.0px;width:13px;height:7px;line-height:7.5px;font-size:7px;background:#dcdcdc;color:#888;text-align:center;padding:1px 0 0 0">1</div><div class="row" style="left:49.0px;top:91.9px;color:#6c6c6c">Point(X = -25.000, Y = 0.000, Z = 0.000)</div><div class="lbl" style="left:32.5px;top:101.8px;width:13px;height:7px;line-height:7.5px;font-size:7px;background:#dcdcdc;color:#888;text-align:center;padding:1px 0 0 0">2</div><div class="row" style="left:49.0px;top:101.7px;color:#6c6c6c">Point(X = 0.000, Y = 0.000, Z = 0.000)</div><div class="lbl" style="left:32.5px;top:111.6px;width:13px;height:7px;line-height:7.5px;font-size:7px;background:#dcdcdc;color:#888;text-align:center;padding:1px 0 0 0">3</div><div class="row" style="left:49.0px;top:111.5px;color:#6c6c6c">Point(X = 25.000, Y = 0.000, Z = 0.000)</div><div class="lbl" style="left:32.5px;top:121.4px;width:13px;height:7px;line-height:7.5px;font-size:7px;background:#dcdcdc;color:#888;text-align:center;padding:1px 0 0 0">4</div><div class="row" style="left:49.0px;top:121.3px;color:#6c6c6c">Point(X = 50.000, Y = 0.000, Z = 0.000)</div><div class="a" style="left:20.2px;top:81.2px;width:1.2px;height:48.0px;background:#d9d9d9;"></div><div class="a" style="left:19.3px;top:127.7px;width:3px;height:3px;border-radius:50%;background:#d9d9d9"></div><svg class="a" style="left:18.5px;top:135.8px" width="5" height="3"><path d="M0 0h4.5L2.25 2.6z" fill="#3b82c8"/></svg><div class="row" style="left:23.5px;top:131.9px;color:#6c6c6c">2</div><div class="row" style="left:32.0px;top:131.9px;color:#6c6c6c">List</div><div class="lbl" style="left:32.5px;top:141.0px;width:13px;height:7px;line-height:7.5px;font-size:7px;background:#dcdcdc;color:#888;text-align:center;padding:1px 0 0 0">0</div><div class="row" style="left:49.0px;top:140.9px;color:#6c6c6c">Point(X = -50.000, Y = 50.000, Z = 0.000)</div><div class="lbl" style="left:32.5px;top:150.8px;width:13px;height:7px;line-height:7.5px;font-size:7px;background:#dcdcdc;color:#888;text-align:center;padding:1px 0 0 0">1</div><div class="row" style="left:49.0px;top:150.7px;color:#6c6c6c">Point(X = -25.000, Y = 50.000, Z = 0.000)</div><div class="lbl" style="left:32.5px;top:160.6px;width:13px;height:7px;line-height:7.5px;font-size:7px;background:#dcdcdc;color:#888;text-align:center;padding:1px 0 0 0">2</div><div class="row" style="left:49.0px;top:160.5px;color:#6c6c6c">Point(X = 0.000, Y = 50.000, Z = 0.000)</div><div class="lbl" style="left:32.5px;top:170.4px;width:13px;height:7px;line-height:7.5px;font-size:7px;background:#dcdcdc;color:#888;text-align:center;padding:1px 0 0 0">3</div><div class="row" style="left:49.0px;top:170.3px;color:#6c6c6c">Point(X = 25.000, Y = 50.000, Z = 0.000)</div><div class="lbl" style="left:32.5px;top:180.2px;width:13px;height:7px;line-height:7.5px;font-size:7px;background:#dcdcdc;color:#888;text-align:center;padding:1px 0 0 0">4</div><div class="row" style="left:49.0px;top:180.1px;color:#6c6c6c">Point(X = 50.000, Y = 50.000, Z = 0.000)</div><div class="a" style="left:20.2px;top:140.0px;width:1.2px;height:48.0px;background:#d9d9d9;"></div><div class="a" style="left:19.3px;top:186.5px;width:3px;height:3px;border-radius:50%;background:#d9d9d9"></div></div><div class="t" style="left:526.0px;top:672.5px;font-size:6.2px;color:#333;font-weight:bold;letter-spacing:-0.45px;word-spacing:1px">@L3 @L2 @L1</div><div class="t" style="left:699.5px;top:669.0px;font-size:8.2px;color:#7a6a6a;font-style:italic">{<span style="color:#a51f1f">15</span>}</div><svg class="a" style="left:0;top:0" width="1200" height="735"><g fill="#2a2a2a"><path d="M11.5 268.8a3 3 0 0 1 0 6z"/><path d="M35.5 267.8a3 3 0 0 0 0 6z"/><path d="M11.5 316.3a3 3 0 0 1 0 6z"/><path d="M35.5 278.5a3 3 0 0 0 0 6z"/><path d="M146.0 267.5a3 3 0 0 1 0 6z"/><path d="M180.0 267.5a3 3 0 0 0 0 6z"/><path d="M146.0 279.5a3 3 0 0 1 0 6z"/><path d="M180.0 284.5a3 3 0 0 0 0 6z"/><path d="M282.0 267.7a3 3 0 0 1 0 6z"/><path d="M309.0 267.7a3 3 0 0 0 0 6z"/><path d="M753.0 268.5a3 3 0 0 0 0 6z"/></g><g fill="#2a7fd0"><path d="M501.0 268.0a3 3 0 0 1 0 6z"/><path d="M563.0 463.0a3 3 0 0 0 0 6z"/><path d="M750.0 462.5a3 3 0 0 0 0 6z"/></g></svg><div class="t" style="left:579.0px;top:370.2px;font-size:21.5px;color:#1682ad;">1</div><div class="a" style="left:584.0px;top:393.0px;width:2.5px;height:44.0px;background:#1682ad;"></div><div class="t" style="left:455.0px;top:522.2px;font-size:21.5px;color:#1682ad;">2</div><div class="a" style="left:479.0px;top:533.0px;width:39.0px;height:2.5px;background:#1682ad;"></div><div class="a" style="left:514px;top:530px;width:8.5px;height:8.5px;border-radius:50%;background:#1682ad"></div><div class="a" style="left:775.5px;top:571.5px;width:8.5px;height:8.5px;border-radius:50%;background:#1682ad"></div><div class="a" style="left:778.5px;top:575.0px;width:2.5px;height:39.5px;background:#1682ad;"></div><div class="t" style="left:772.8px;top:620.2px;font-size:21.5px;color:#1682ad;">3</div></body></html>
